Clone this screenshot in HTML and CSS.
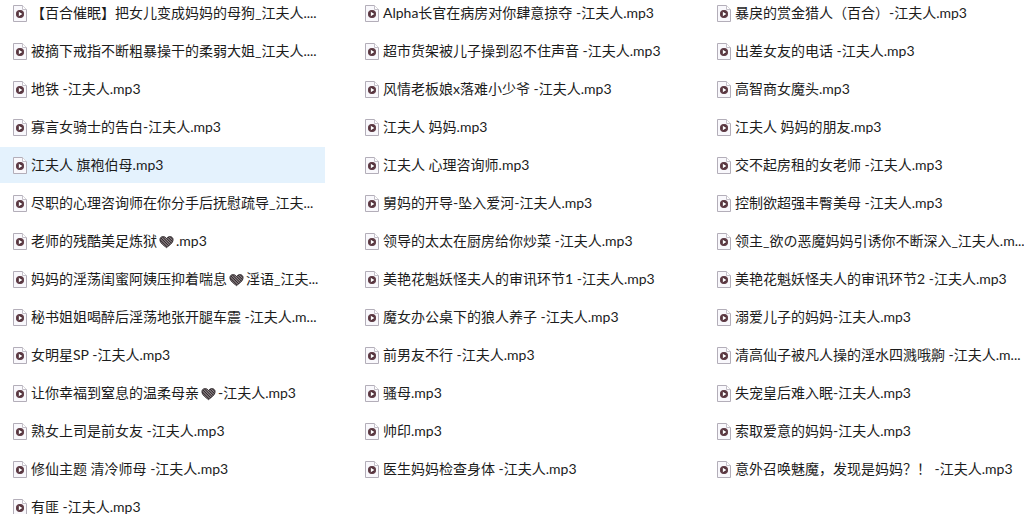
FILE: index.html
```html
<!DOCTYPE html>
<html lang="zh-CN">
<head>
<meta charset="utf-8">
<title>文件列表</title>
<link rel="stylesheet" href="styles.css">
</head>
<body>
<svg class="defs" aria-hidden="true">
<defs>
<pattern id="hatch" width="2" height="2" patternUnits="userSpaceOnUse" patternTransform="rotate(-45)"><rect width="2" height="2" fill="#2b2427"/><rect width="1" height="2" fill="#9b9094"/></pattern>
<symbol id="file" viewBox="0 0 14 17"><path d="M.5.5h9l4 4v12H.5z" fill="#f9f8fc" stroke="#b3aeb9"/><path d="M9.500.500v4h4" fill="#fff" stroke="#c4c0c9"/><circle cx="7" cy="9" r="4" fill="#4a2c36"/><circle cx="7" cy="9" r="3.300" fill="none" stroke="#80525a" stroke-width=".6"/><path d="M5.800 6.800v4.400L9.400 9z" fill="#fff"/></symbol>
<symbol id="heart" viewBox="0 0 16 14"><path d="M8 13C5 10.500 1 8 1 4.500 1 1 5.500 0 8 3.200 10.500 0 15 1 15 4.500 15 8 11 10.500 8 13z" fill="url(#hatch)" stroke="#2b2427"/></symbol>
</defs>
</svg>
<ul class="files">
<li class="file"><svg class="icon"><use href="#file"/></svg><span class="name">【百合催眠】把女儿变成妈妈的母狗_江夫人....</span></li>
<li class="file"><svg class="icon"><use href="#file"/></svg><span class="name">Alpha长官在病房对你肆意掠夺 -江夫人.mp3</span></li>
<li class="file"><svg class="icon"><use href="#file"/></svg><span class="name">暴戾的赏金猎人（百合）-江夫人.mp3</span></li>
<li class="file"><svg class="icon"><use href="#file"/></svg><span class="name">被摘下戒指不断粗暴操干的柔弱大姐_江夫人....</span></li>
<li class="file"><svg class="icon"><use href="#file"/></svg><span class="name">超市货架被儿子操到忍不住声音 -江夫人.mp3</span></li>
<li class="file"><svg class="icon"><use href="#file"/></svg><span class="name">出差女友的电话 -江夫人.mp3</span></li>
<li class="file"><svg class="icon"><use href="#file"/></svg><span class="name">地铁 -江夫人.mp3</span></li>
<li class="file"><svg class="icon"><use href="#file"/></svg><span class="name">风情老板娘x落难小少爷 -江夫人.mp3</span></li>
<li class="file"><svg class="icon"><use href="#file"/></svg><span class="name">高智商女魔头.mp3</span></li>
<li class="file"><svg class="icon"><use href="#file"/></svg><span class="name">寡言女骑士的告白-江夫人.mp3</span></li>
<li class="file"><svg class="icon"><use href="#file"/></svg><span class="name">江夫人 妈妈.mp3</span></li>
<li class="file"><svg class="icon"><use href="#file"/></svg><span class="name">江夫人 妈妈的朋友.mp3</span></li>
<li class="file hovered"><svg class="icon"><use href="#file"/></svg><span class="name">江夫人 旗袍伯母.mp3</span></li>
<li class="file"><svg class="icon"><use href="#file"/></svg><span class="name">江夫人 心理咨询师.mp3</span></li>
<li class="file"><svg class="icon"><use href="#file"/></svg><span class="name">交不起房租的女老师 -江夫人.mp3</span></li>
<li class="file"><svg class="icon"><use href="#file"/></svg><span class="name">尽职的心理咨询师在你分手后抚慰疏导_江夫...</span></li>
<li class="file"><svg class="icon"><use href="#file"/></svg><span class="name">舅妈的开导-坠入爱河-江夫人.mp3</span></li>
<li class="file"><svg class="icon"><use href="#file"/></svg><span class="name">控制欲超强丰臀美母 -江夫人.mp3</span></li>
<li class="file"><svg class="icon"><use href="#file"/></svg><span class="name">老师的残酷美足炼狱<svg class="heart"><use href="#heart"/></svg>.mp3</span></li>
<li class="file"><svg class="icon"><use href="#file"/></svg><span class="name">领导的太太在厨房给你炒菜 -江夫人.mp3</span></li>
<li class="file"><svg class="icon"><use href="#file"/></svg><span class="name">领主_欲の恶魔妈妈引诱你不断深入_江夫人.m...</span></li>
<li class="file"><svg class="icon"><use href="#file"/></svg><span class="name">妈妈的淫荡闺蜜阿姨压抑着喘息<svg class="heart"><use href="#heart"/></svg>淫语_江夫...</span></li>
<li class="file"><svg class="icon"><use href="#file"/></svg><span class="name">美艳花魁妖怪夫人的审讯环节1 -江夫人.mp3</span></li>
<li class="file"><svg class="icon"><use href="#file"/></svg><span class="name">美艳花魁妖怪夫人的审讯环节2 -江夫人.mp3</span></li>
<li class="file"><svg class="icon"><use href="#file"/></svg><span class="name">秘书姐姐喝醉后淫荡地张开腿车震 -江夫人.m...</span></li>
<li class="file"><svg class="icon"><use href="#file"/></svg><span class="name">魔女办公桌下的狼人养子 -江夫人.mp3</span></li>
<li class="file"><svg class="icon"><use href="#file"/></svg><span class="name">溺爱儿子的妈妈-江夫人.mp3</span></li>
<li class="file"><svg class="icon"><use href="#file"/></svg><span class="name">女明星SP -江夫人.mp3</span></li>
<li class="file"><svg class="icon"><use href="#file"/></svg><span class="name">前男友不行 -江夫人.mp3</span></li>
<li class="file"><svg class="icon"><use href="#file"/></svg><span class="name">清高仙子被凡人操的淫水四溅哦齁 -江夫人.m...</span></li>
<li class="file"><svg class="icon"><use href="#file"/></svg><span class="name">让你幸福到窒息的温柔母亲<svg class="heart"><use href="#heart"/></svg>-江夫人.mp3</span></li>
<li class="file"><svg class="icon"><use href="#file"/></svg><span class="name">骚母.mp3</span></li>
<li class="file"><svg class="icon"><use href="#file"/></svg><span class="name">失宠皇后难入眠-江夫人.mp3</span></li>
<li class="file"><svg class="icon"><use href="#file"/></svg><span class="name">熟女上司是前女友 -江夫人.mp3</span></li>
<li class="file"><svg class="icon"><use href="#file"/></svg><span class="name">帅印.mp3</span></li>
<li class="file"><svg class="icon"><use href="#file"/></svg><span class="name">索取爱意的妈妈-江夫人.mp3</span></li>
<li class="file"><svg class="icon"><use href="#file"/></svg><span class="name">修仙主题 清冷师母 -江夫人.mp3</span></li>
<li class="file"><svg class="icon"><use href="#file"/></svg><span class="name">医生妈妈检查身体 -江夫人.mp3</span></li>
<li class="file"><svg class="icon"><use href="#file"/></svg><span class="name">意外召唤魅魔，发现是妈妈？！ -江夫人.mp3</span></li>
<li class="file"><svg class="icon"><use href="#file"/></svg><span class="name">有匪 -江夫人.mp3</span></li>
</ul>
</body>
</html>
```
FILE: styles.css
```css
body {
  margin: 0;
  background: #fff;
  color: #1c1c1c;
  font: 14px/20px Lato, "Noto Sans CJK SC", sans-serif;
  overflow: hidden;
}
.defs {
  position: absolute;
  width: 0;
  height: 0;
}
.files {
  display: grid;
  grid-template-columns: repeat(3, minmax(0, 1fr));
  gap: 2px 27px;
  margin: -5px -5px 0 0;
  padding: 0;
  list-style: none;
}
.file {
  display: flex;
  align-items: center;
  gap: 4px;
  height: 36px;
  padding-left: 13px;
}
.hovered {
  background: #e4f2fd;
}
.icon {
  flex: none;
  width: 14px;
  height: 17px;
}
.name {
  white-space: nowrap;
}
.heart {
  width: 15px;
  height: 14px;
  margin: 0 2px;
  vertical-align: -3px;
}
```
